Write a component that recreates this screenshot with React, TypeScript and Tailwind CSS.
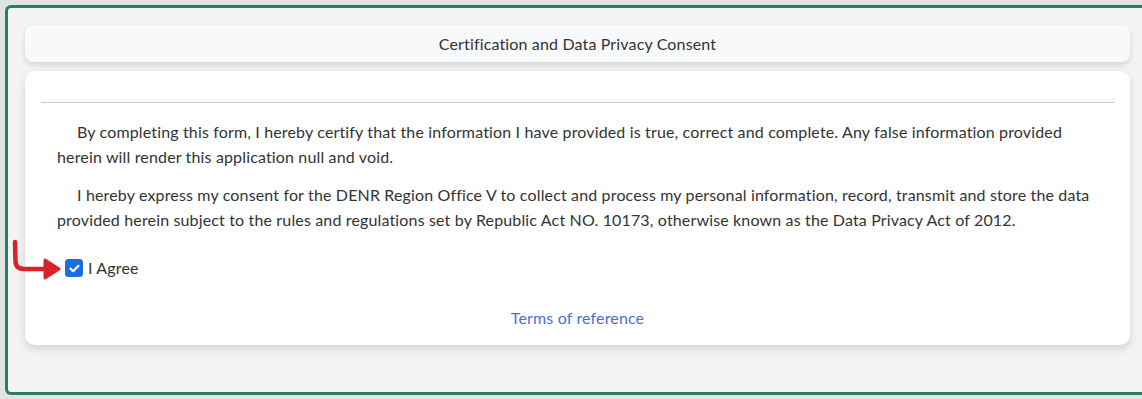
import React, { useState } from "react";

export default function App() {
  const [agree, setAgree] = useState(true);

  return (
    <div className="h-[399px] w-[1142px] overflow-hidden bg-[#dfe3e1] pt-[5px] pl-[5px] font-['Lato',sans-serif] tracking-[0.15px] text-[#333]">
      <div className="relative h-[390px] rounded-l-[6px] border-[3px] border-r-0 border-[#2b7c58] bg-[#f3f4f5] pt-[17px] pl-[17px] pr-[12px]">
        <div className="flex h-[37px] items-center justify-center rounded-[8px] bg-[#f8f9fa] text-[16px] shadow-[0_3px_6px_rgba(0,0,0,0.13)]">
          Certification and Data Privacy Consent
        </div>

        <div className="mt-[9px] rounded-[10px] bg-white px-4 pt-[31px] pb-[15px] shadow-[0_4px_10px_rgba(0,0,0,0.14)]">
          <hr className="border-t border-[#c8c8c8]" />
          <div className="px-4 pt-[17px] text-[16px] leading-[24.5px]">
            <p className="mb-[14px] indent-[20px]">
              By completing this form, I hereby certify that the information I have provided is true, correct and complete. Any false information provided herein will render this application null and void.
            </p>
            <p className="indent-[20px]">
              I hereby express my consent for the DENR Region Office V to collect and process my personal information, record, transmit and store the data provided herein subject to the rules and regulations set by Republic Act NO. 10173, otherwise known as the Data Privacy Act of 2012.
            </p>

            <label className="mt-[24px] ml-2 flex cursor-pointer items-center gap-[5px]">
              <span
                onClick={() => setAgree(!agree)}
                className={`flex h-[18px] w-[18px] items-center justify-center rounded-[3px] border ${agree ? "border-[#1a6fe0] bg-[#1a6fe0]" : "border-[#999] bg-white"}`}
              >
                {agree && (
                  <svg width="11" height="9" viewBox="0 0 11 9" fill="none">
                    <path d="M1.5 4.6L4.2 7.2L9.5 1.8" stroke="white" strokeWidth="2.2" strokeLinecap="round" strokeLinejoin="round" />
                  </svg>
                )}
              </span>
              <span className="text-[16px]">I Agree</span>
            </label>

            <div className="mt-[25px] text-center">
              <a href="#" className="text-[16px] text-[#4b6fcf]">
                Terms of reference
              </a>
            </div>
          </div>
        </div>

        {/* red annotation arrow */}
        <svg className="absolute left-[0px] top-[230px]" width="58" height="46" viewBox="0 0 58 46" fill="none">
          <path d="M7 4 L7.5 24 Q8 31 16 31 L40 31" stroke="#d9232a" strokeWidth="4.5" strokeLinecap="round" />
          <path d="M37 22 L51 31 L37 40 Z" fill="#d9232a" stroke="#d9232a" strokeWidth="3" strokeLinejoin="round" />
        </svg>
      </div>
    </div>
  );
}
